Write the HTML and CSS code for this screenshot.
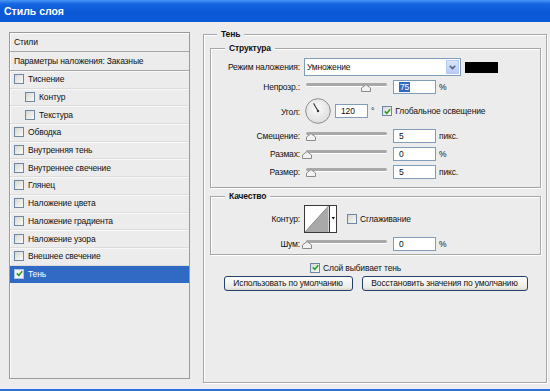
FILE: index.html
```html
<!DOCTYPE html>
<html lang="ru">

<head>
    <meta charset="UTF-8">
    <meta name="viewport" content="width=device-width, initial-scale=1.0">
    <title>Стиль слоя</title>
    <link rel="stylesheet" href="styles.css">
</head>

<body>
    <div class="window">
        <div class="titlebar">Стиль слоя</div>
        <div class="content">
            <aside class="styles-panel">
                <div class="panel-head">Стили</div>
                <div class="panel-head">Параметры наложения: Заказные</div>
                <ul class="effects">
                    <li><span class="check"></span>Тиснение</li>
                    <li class="sub"><span class="check"></span>Контур</li>
                    <li class="sub"><span class="check"></span>Текстура</li>
                    <li><span class="check"></span>Обводка</li>
                    <li><span class="check"></span>Внутренняя тень</li>
                    <li><span class="check"></span>Внутреннее свечение</li>
                    <li><span class="check"></span>Глянец</li>
                    <li><span class="check"></span>Наложение цвета</li>
                    <li><span class="check"></span>Наложение градиента</li>
                    <li><span class="check"></span>Наложение узора</li>
                    <li><span class="check"></span>Внешнее свечение</li>
                    <li class="active">
                        <span class="check on"><svg width="7" height="7" viewBox="0 0 7 7"><path d="M0.8 3.4 L2.8 5.4 L6.2 1.2" fill="none" stroke="#21a121" stroke-width="1.6"/></svg></span>Тень
                    </li>
                </ul>
            </aside>

            <fieldset class="group outer">
                <legend>Тень</legend>

                <fieldset class="group structure">
                    <legend>Структура</legend>
                    <div class="form">
                        <label>Режим наложения:</label>
                        <div class="ctrl">
                            <div class="select">
                                <span class="select-text">Умножение</span>
                                <span class="select-btn"><svg width="7" height="5" viewBox="0 0 7 5"><path d="M0.8 0.8 L3.5 3.6 L6.2 0.8" fill="none" stroke="#4d6185" stroke-width="1.6"/></svg></span>
                            </div>
                            <span class="swatch"></span>
                        </div>

                        <label>Непрозр.:</label>
                        <div class="ctrl">
                            <div class="slider"><span class="thumb" style="left:55px"><svg width="10" height="8" viewBox="0 0 10 8"><path d="M5 0.5 L9.5 4 L9.5 7.5 L0.5 7.5 L0.5 4 Z" fill="#f2f2f2" stroke="#8a8a8a"/></svg></span></div>
                            <div class="field"><span class="sel">75</span></div>
                            <span class="unit">%</span>
                        </div>

                        <label>Угол:</label>
                        <div class="ctrl angle">
                            <svg class="dial" width="26" height="26" viewBox="0 0 26 26">
                                <defs>
                                    <radialGradient id="dialbg" cx="0.45" cy="0.4" r="0.6">
                                        <stop offset="0" stop-color="#fbfbfb"/>
                                        <stop offset="1" stop-color="#dedede"/>
                                    </radialGradient>
                                </defs>
                                <circle cx="13" cy="13" r="12.3" fill="url(#dialbg)" stroke="#8e8e8e"/>
                                <line x1="13" y1="13" x2="8.6" y2="5.4" stroke="#3a3a3a" stroke-width="1.1"/>
                                <circle cx="13" cy="13" r="1.2" fill="#333"/>
                            </svg>
                            <div class="field short">120</div>
                            <span class="unit">°</span>
                            <span class="check on gap"><svg width="7" height="7" viewBox="0 0 7 7"><path d="M0.8 3.4 L2.8 5.4 L6.2 1.2" fill="none" stroke="#21a121" stroke-width="1.6"/></svg></span>
                            <span class="check-text">Глобальное освещение</span>
                        </div>

                        <label>Смещение:</label>
                        <div class="ctrl">
                            <div class="slider"><span class="thumb" style="left:0px"><svg width="10" height="8" viewBox="0 0 10 8"><path d="M5 0.5 L9.5 4 L9.5 7.5 L0.5 7.5 L0.5 4 Z" fill="#f2f2f2" stroke="#8a8a8a"/></svg></span></div>
                            <div class="field">5</div>
                            <span class="unit">пикс.</span>
                        </div>

                        <label>Размах:</label>
                        <div class="ctrl">
                            <div class="slider"><span class="thumb" style="left:-4px"><svg width="10" height="8" viewBox="0 0 10 8"><path d="M5 0.5 L9.5 4 L9.5 7.5 L0.5 7.5 L0.5 4 Z" fill="#f2f2f2" stroke="#8a8a8a"/></svg></span></div>
                            <div class="field">0</div>
                            <span class="unit">%</span>
                        </div>

                        <label>Размер:</label>
                        <div class="ctrl">
                            <div class="slider"><span class="thumb" style="left:0px"><svg width="10" height="8" viewBox="0 0 10 8"><path d="M5 0.5 L9.5 4 L9.5 7.5 L0.5 7.5 L0.5 4 Z" fill="#f2f2f2" stroke="#8a8a8a"/></svg></span></div>
                            <div class="field">5</div>
                            <span class="unit">пикс.</span>
                        </div>
                    </div>
                </fieldset>

                <fieldset class="group quality">
                    <legend>Качество</legend>
                    <div class="form">
                        <label>Контур:</label>
                        <div class="ctrl">
                            <svg class="contour" width="33" height="28" viewBox="0 0 33 28">
                                <rect x="0.5" y="0.5" width="32" height="27" fill="#fff" stroke="#3a3a3a"/>
                                <path d="M1 27 L24.5 1 L24.5 27 Z" fill="#a9a9a9"/>
                                <line x1="1" y1="27" x2="24.5" y2="1" stroke="#8c8c8c"/>
                                <line x1="25.5" y1="1" x2="25.5" y2="27" stroke="#3a3a3a"/>
                                <path d="M27.5 12 L31 12 L29.25 14.5 Z" fill="#111"/>
                            </svg>
                            <span class="check gap-wide"></span>
                            <span class="check-text">Сглаживание</span>
                        </div>

                        <label>Шум:</label>
                        <div class="ctrl">
                            <div class="slider"><span class="thumb" style="left:-4px"><svg width="10" height="8" viewBox="0 0 10 8"><path d="M5 0.5 L9.5 4 L9.5 7.5 L0.5 7.5 L0.5 4 Z" fill="#f2f2f2" stroke="#8a8a8a"/></svg></span></div>
                            <div class="field">0</div>
                            <span class="unit">%</span>
                        </div>
                    </div>
                </fieldset>

                <div class="knockout">
                    <span class="check on"><svg width="7" height="7" viewBox="0 0 7 7"><path d="M0.8 3.4 L2.8 5.4 L6.2 1.2" fill="none" stroke="#21a121" stroke-width="1.6"/></svg></span>
                    <span class="check-text">Слой выбивает тень</span>
                </div>

                <div class="buttons">
                    <button class="btn btn-default">Использовать по умолчанию</button>
                    <button class="btn btn-reset">Восстановить значения по умолчанию</button>
                </div>
            </fieldset>
        </div>
    </div>
</body>

</html>
```

FILE: styles.css
```css
* {
    box-sizing: border-box;
}

ul {
    list-style: none;
    margin: 0;
    padding: 0;
}

body {
    margin: 0;
    font-family: "Liberation Sans", Arial, sans-serif;
    font-size: 8.5px;
    letter-spacing: -0.15px;
    color: #111;
}

.window {
    width: 550px;
    height: 391px;
    background-color: #ececec;
    border-bottom: 2px solid #2e6ee0;
}

.titlebar {
    height: 22px;
    line-height: 23px;
    padding-left: 4px;
    color: #fff;
    font-size: 10.5px;
    font-weight: bold;
    letter-spacing: 0;
    background: linear-gradient(#4a97f8 0%, #1565e2 18%, #0a58d6 55%, #0c5ad8 100%);
}

.content {
    display: flex;
    align-items: flex-start;
    gap: 13px;
    padding: 10px 3px 0 9px;
}

/* список стилей слева */
.styles-panel {
    width: 181px;
    height: 347px;
    border: 1px solid #9a9a9a;
    box-shadow: inset 1px 1px 0 #fdfdfd;
    background-color: #ececec;
}

.panel-head {
    height: 19px;
    line-height: 18px;
    padding-left: 4px;
    border-bottom: 1px solid #a8a8a8;
}

.effects>li {
    display: flex;
    align-items: center;
    height: 17.7px;
    padding-left: 4px;
    border-bottom: 1px solid #dcdcdc;
    box-shadow: inset 0 1px 0 #f8f8f8;
}

.effects>li.sub {
    padding-left: 15px;
}

.effects>li.active {
    background-color: #316ac5;
    color: #fff;
    box-shadow: none;
    border-bottom-color: #316ac5;
}

.check {
    display: inline-flex;
    align-items: center;
    justify-content: center;
    width: 10px;
    height: 10px;
    flex: none;
    border: 1px solid #6f87a4;
    background: linear-gradient(135deg, #d8d8d2, #fafaf8);
    margin-right: 4px;
}

.effects>li.active .check {
    border-color: #a9c0e8;
    background: #f4f4f4;
}

/* правая часть */
.group {
    margin: 0;
    min-width: 0;
    border: 1px solid #a6a6a6;
    box-shadow: inset 1px 1px 0 #fff, 1px 1px 0 #fff;
}

.group>legend {
    font-weight: bold;
    line-height: 12px;
    padding: 0 4px;
    background-color: #ececec;
}

.outer {
    width: 344px;
    height: 355px;
    margin-top: -4px;
    padding: 2px 5px 0 6px;
}

.outer>legend {
    margin-left: 7px;
}

.structure {
    padding: 4px 0 8px 0;
}

.structure>legend,
.quality>legend {
    margin-left: 14px;
}

.quality {
    margin-top: 2px;
    padding: 3px 0 3px 0;
}

.form {
    display: grid;
    grid-template-columns: 89px 1fr;
    column-gap: 4px;
    row-gap: 4px;
    align-items: center;
}

.form>label {
    text-align: right;
}

.ctrl {
    display: flex;
    align-items: center;
}

.ctrl.angle {
    margin-bottom: 1px;
}

.select {
    display: flex;
    width: 157px;
    height: 18px;
    border: 1px solid #7f9db9;
    background-color: #fff;
}

.select-text {
    flex: 1;
    line-height: 16px;
    padding-left: 2px;
}

.select-btn {
    display: flex;
    align-items: center;
    justify-content: center;
    width: 13px;
    margin: 1px;
    border: 1px solid #b9cbf3;
    background: linear-gradient(#dbe5fb, #b7cbf5);
}

.swatch {
    width: 33px;
    height: 11px;
    margin-left: 4px;
    background-color: #000;
}

.slider {
    position: relative;
    width: 81px;
    height: 14px;
    margin-left: 2px;
}

.slider::before {
    content: "";
    position: absolute;
    left: 0;
    right: 0;
    top: 3px;
    height: 3px;
    border-radius: 2px;
    background-color: #a9a9a9;
    box-shadow: 0 1px 0 #fff;
}

.slider>.thumb {
    position: absolute;
    top: 4px;
    width: 10px;
    height: 8px;
    display: block;
}

.slider>.thumb>svg {
    display: block;
}

.field {
    width: 43px;
    height: 14px;
    line-height: 12px;
    margin-left: 6px;
    padding-left: 5px;
    border: 1px solid #7f9db9;
    background-color: #fff;
}

.field.short {
    width: 33px;
    margin-left: 4px;
}

.field>.sel {
    background-color: #316ac5;
    color: #fff;
    padding: 0 1px;
}

.unit {
    margin-left: 3px;
}

.dial {
    display: block;
    margin-left: 1px;
}

.check.gap {
    margin-left: 8px;
    margin-right: 3px;
}

.check.gap-wide {
    margin-left: 10px;
    margin-right: 3px;
}

.contour {
    display: block;
}

.knockout {
    display: flex;
    align-items: center;
    height: 13px;
    margin-top: 6px;
    padding-left: 100px;
}

.knockout>.check {
    margin-right: 3px;
}

.buttons {
    display: flex;
    justify-content: center;
    gap: 9px;
    margin-top: 2px;
}

.btn {
    height: 15px;
    padding: 0;
    font-family: inherit;
    font-size: 8.5px;
    letter-spacing: -0.15px;
    line-height: 13px;
    color: #111;
    border: 1px solid #24406c;
    border-radius: 3px;
    background: linear-gradient(#fdfdfb, #ecebe5 80%, #d8d6cc);
}

.btn-default {
    width: 129px;
}

.btn-reset {
    width: 166px;
}
```
